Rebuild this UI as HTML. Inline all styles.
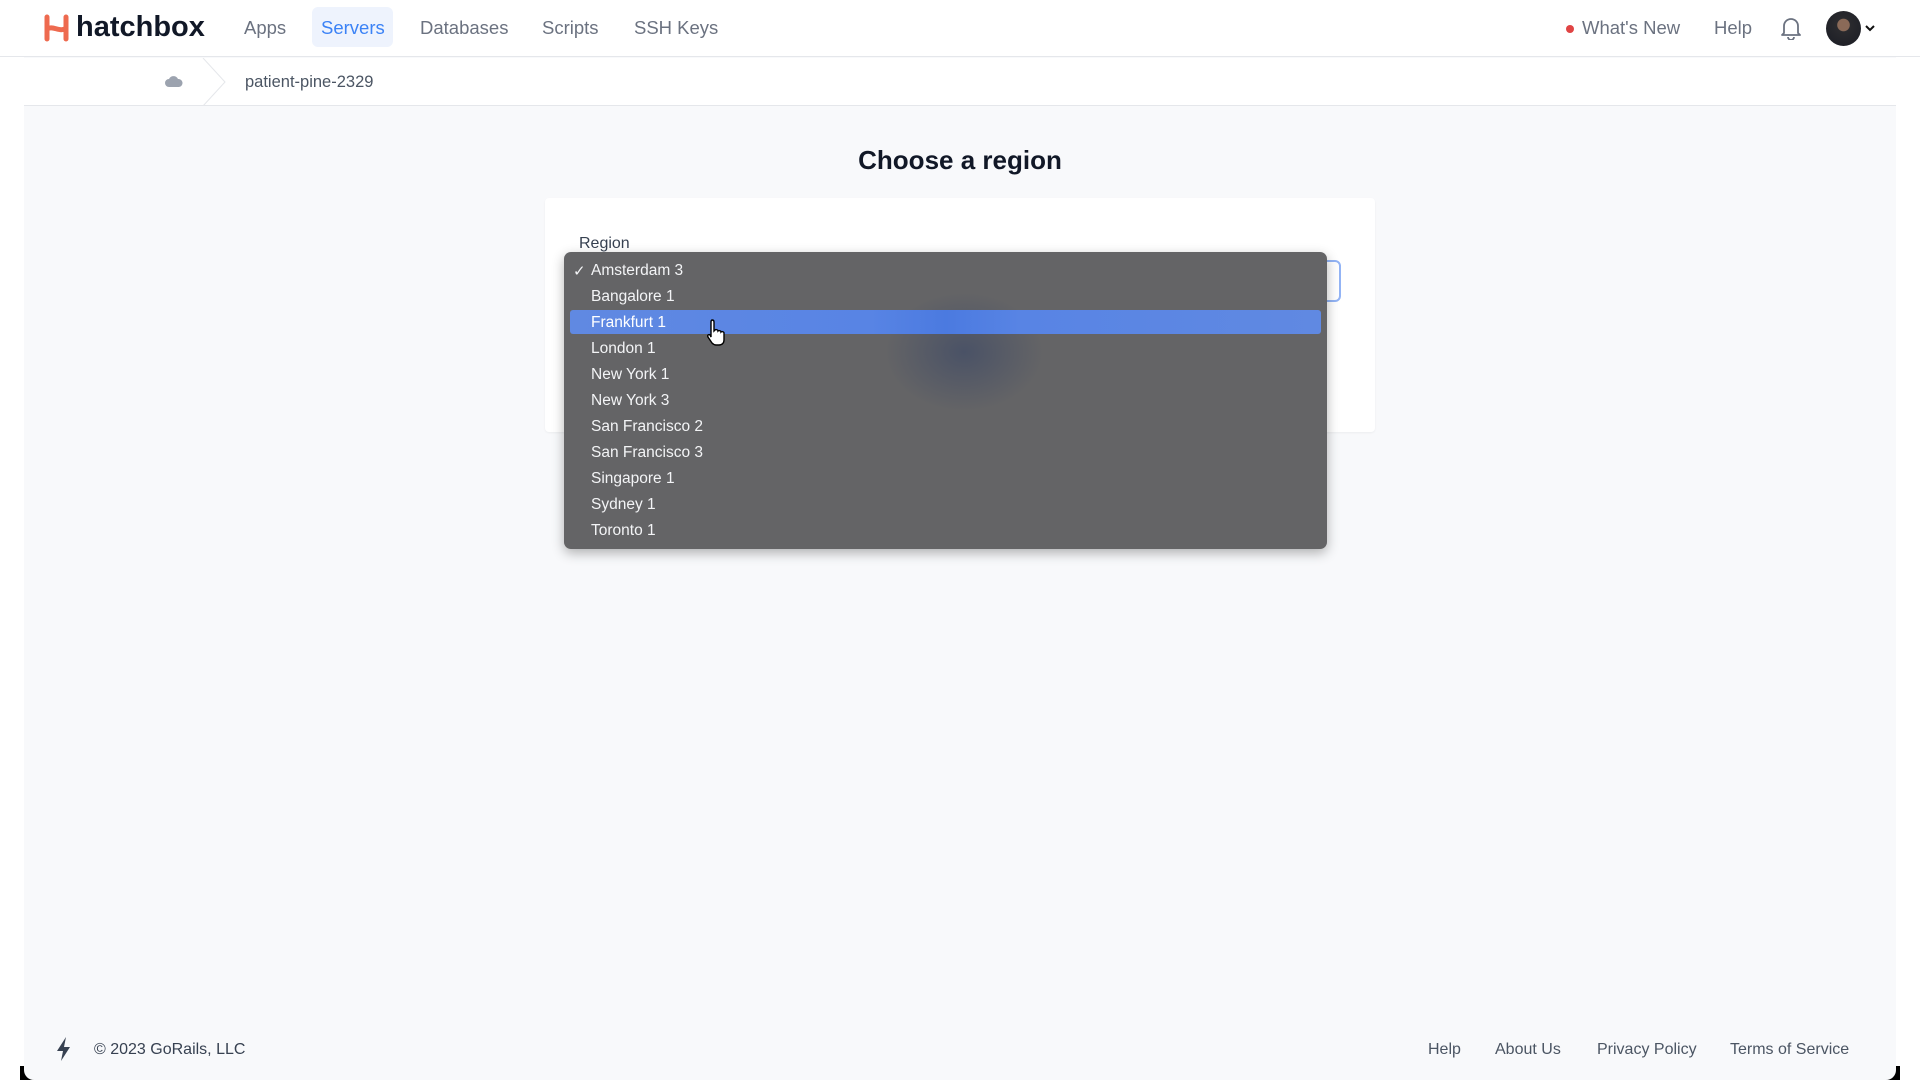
<!DOCTYPE html>
<html><head><meta charset="utf-8"><style>
*{margin:0;padding:0;box-sizing:border-box}
body{width:1920px;height:1080px;background:#fff;font-family:"Liberation Sans",sans-serif;position:relative;overflow:hidden;color:#374151}
.a{position:absolute;white-space:nowrap}
.page{position:absolute;left:24px;top:0;width:1872px;height:1080px;background:#f8f9fb;border-radius:0 0 10px 10px}
.nav{position:absolute;left:0;top:0;width:1920px;height:57px;background:#fff;border-bottom:1px solid #e5e7eb}
.bc{position:absolute;left:24px;top:58px;width:1872px;height:48px;background:#fff;border-bottom:1px solid #e5e7eb}
.nl{font-size:18.5px;color:#6b7280;top:17px}
.item{position:absolute;left:591px;font-size:15.5px;color:#f3f4f6}
</style></head><body>
<div style="position:absolute;left:20px;bottom:0;width:16px;height:14px;background:#000"></div>
<div style="position:absolute;left:1884px;bottom:0;width:16px;height:14px;background:#000"></div>
<div class="page"></div>
<div class="nav"></div>
<div class="bc"></div>
<svg class="a" style="left:42px;top:13px" width="30" height="30" viewBox="0 0 30 30"><g stroke="#ee6a4f" stroke-width="5" stroke-linecap="round" fill="none"><path d="M5 4v22M24 4v22M5 16c6-4 13 4 19-1"/></g></svg>
<div class="a" style="left:76px;top:11px;font-size:29px;font-weight:bold;color:#111827">hatchbox</div>
<div class="a" style="left:312px;top:7px;width:81px;height:40px;background:#eef3fd;border-radius:6px"></div>
<div class="a nl" style="left:244px">Apps</div>
<div class="a nl" style="left:321px;color:#3b82f6">Servers</div>
<div class="a nl" style="left:420px">Databases</div>
<div class="a nl" style="left:542px">Scripts</div>
<div class="a nl" style="left:634px">SSH Keys</div>
<div class="a" style="left:1566px;top:25px;width:8px;height:8px;border-radius:50%;background:#e04444"></div>
<div class="a nl" style="left:1582px">What's New</div>
<div class="a nl" style="left:1714px">Help</div>
<svg class="a" style="left:1780px;top:16px" width="22" height="24" viewBox="0 0 22 24"><path d="M4 17V10a7 7 0 0 1 14 0v7l2 2H2zM8 21a3 3 0 0 0 6 0" fill="none" stroke="#6b7280" stroke-width="1.8" stroke-linejoin="round"/></svg>
<div class="a" style="left:1826px;top:11px;width:35px;height:35px;border-radius:50%;background:radial-gradient(circle at 50% 40%,#8a6a58 0 22%,#2a2a2e 24%,#1a1c24)"></div>
<svg class="a" style="left:1865px;top:24px" width="10" height="8"><path d="M1 2l4 4 4-4" stroke="#111" stroke-width="2" fill="none"/></svg>
<svg class="a" style="left:165px;top:74px" width="18" height="14"><path d="M4 13a4 4 0 0 1 0-8 5 5 0 0 1 9 0 4 4 0 0 1 1 8z" fill="#9ca3af"/></svg>
<svg class="a" style="left:202px;top:58px" width="26" height="48"><path d="M1 0l22 24-22 24" stroke="#e5e7eb" fill="none"/></svg>
<div class="a" style="left:245px;top:73px;font-size:16.5px;color:#4b5563">patient-pine-2329</div>
<div class="a" style="left:0;width:1920px;text-align:center;top:145px;font-size:26px;font-weight:bold;color:#111827">Choose a region</div>
<div class="a" style="left:545px;top:198px;width:830px;height:234px;background:#fff;border-radius:4px;box-shadow:0 1px 2px rgba(0,0,0,.05)"></div>
<div class="a" style="left:579px;top:235px;font-size:16px;color:#374151">Region</div>
<div class="a" style="left:579px;top:260px;width:762px;height:42px;border:2px solid #93b4f5;border-radius:6px"></div>
<div class="a" style="left:564px;top:252px;width:763px;height:297px;background:#646466;border-radius:7px;box-shadow:0 4px 12px rgba(0,0,0,.3);overflow:hidden">
<div style="position:absolute;left:320px;top:40px;width:160px;height:120px;border-radius:50%;background:radial-gradient(ellipse,#4a5266 0%,rgba(100,100,102,0) 70%)"></div>
<div style="position:absolute;left:6px;top:58px;width:751px;height:24px;background:linear-gradient(90deg,#6089e2,#5884e4 40%,#4b7ae0 50%,#5884e4 60%,#6089e2);border-radius:3px"></div>
</div>
<div class="a" style="left:573px;top:262px;font-size:15px;color:#f3f4f6">✓</div>
<div class="item" style="top:262px">Amsterdam 3</div>
<div class="item" style="top:288px">Bangalore 1</div>
<div class="item" style="top:314px;color:#fff">Frankfurt 1</div>
<div class="item" style="top:340px">London 1</div>
<div class="item" style="top:366px">New York 1</div>
<div class="item" style="top:392px">New York 3</div>
<div class="item" style="top:418px">San Francisco 2</div>
<div class="item" style="top:444px">San Francisco 3</div>
<div class="item" style="top:470px">Singapore 1</div>
<div class="item" style="top:496px">Sydney 1</div>
<div class="item" style="top:522px">Toronto 1</div>
<svg class="a" style="left:706px;top:318px" width="24" height="28" viewBox="0 0 24 28"><path d="M6 2c1.5 0 2 1 2 2v9l1-1c1-1 3 0 3 1 1-1 3 0 3 1 1-1 3 0 3 1v7c0 3-2 5-5 5h-3c-2 0-3-1-4-2l-4-6c-1-2 1-3 2-2l1 2V4c0-1 .5-2 1-2z" fill="#fff" stroke="#000" stroke-width="1.4"/></svg>
<svg class="a" style="left:55px;top:1036px" width="18" height="26"><path d="M11 1L2 15h6l-2 10 9-14H9z" fill="#374151"/></svg>
<div class="a" style="left:94px;top:1041px;font-size:16px;color:#374151">© 2023 GoRails, LLC</div>
<div class="a" style="left:1428px;top:1041px;font-size:16px;color:#4b5563">Help</div>
<div class="a" style="left:1495px;top:1041px;font-size:16px;color:#4b5563">About Us</div>
<div class="a" style="left:1597px;top:1041px;font-size:16px;color:#4b5563">Privacy Policy</div>
<div class="a" style="left:1730px;top:1041px;font-size:16px;color:#4b5563">Terms of Service</div>
</body></html>
